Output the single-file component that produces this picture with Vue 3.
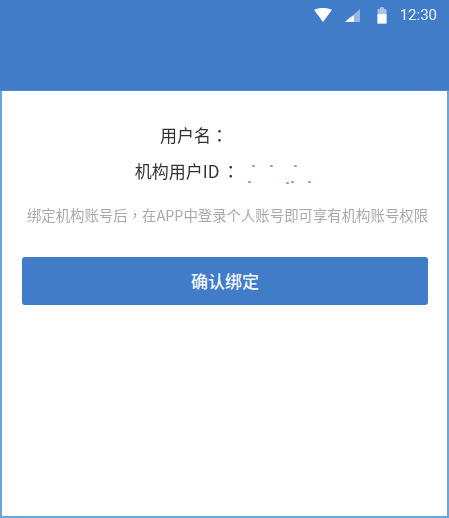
<script setup>
const specks = [
  { x: 13, y: 5 }, { x: 31, y: 5 }, { x: 55, y: 5 },
  { x: 9, y: 21 }, { x: 47, y: 22 }, { x: 52, y: 21 }, { x: 69, y: 21 }
]
</script>

<template>
  <div class="page">
    <header class="top">
      <div class="status">
        <svg class="wifi" width="18" height="14" viewBox="0 0 17 13"><path d="M0 1.500C5 -.5 12 -.5 17 1.500L8.500 13Z" fill="#fff"/></svg>
        <svg class="signal" width="16" height="13" viewBox="0 0 16 13"><path d="M15 0V13H0Z" fill="#fff" opacity=".45"/><path d="M9 6.500V13H0L5 8.500Z" fill="#fff" opacity=".9"/></svg>
        <svg class="battery" width="10" height="17" viewBox="0 0 10 17"><path d="M3 .5Q5 -.3 7 .5V2H8.500Q9.500 2 9.500 3V16.500H.5V3Q.5 2 1.500 2H3Z" fill="#fff" opacity=".55"/><path d="M.5 7H9.500V16.500H.5Z" fill="#fff"/></svg>
        <span class="time">12:30</span>
      </div>
    </header>
    <main class="body">
      <div class="row">
        <span class="label">用户名<span class="colon">：</span></span>
        <span class="value value-name"></span>
      </div>
      <div class="row">
        <span class="label">机构用户ID<span class="colon colon-id">：</span></span>
        <span class="value value-id">
          <i v-for="(s, i) in specks" :key="i" class="speck" :style="{ left: s.x + 'px', top: s.y + 'px' }"></i>
        </span>
      </div>
      <p class="hint">绑定机构账号后<span class="punct">，</span>在APP中登录个人账号即可享有机构账号权限</p>
      <button class="confirm">确认绑定</button>
    </main>
  </div>
</template>

<style scoped>
.page {
  display: flex;
  flex-direction: column;
  width: 449px;
  height: 518px;
  background: #fff;
  font-family: "Noto Sans CJK SC", "Liberation Sans", sans-serif;
  overflow: hidden;
}
.top {
  flex: none;
  height: 90px;
  background: #417cc8;
  border-bottom: 1px solid #4f8ad0;
}
.status {
  display: flex;
  justify-content: flex-end;
  align-items: center;
  height: 30px;
  padding-right: 12px;
  color: #fff;
  filter: blur(0.4px);
}
.wifi { margin-right: 13px; }
.signal { margin-right: 16px; margin-top: 1px; }
.battery { margin-right: 13px; }
.time {
  font: 15px/1 Roboto, sans-serif;
  color: #e6eef9;
}
.body {
  flex: 1;
  display: flex;
  flex-direction: column;
  padding: 26px 20px 0;
  border: solid #6aa5dc;
  border-width: 0 2px 2px;
}
.row {
  display: flex;
  justify-content: center;
  align-items: center;
  height: 36px;
}
.label {
  font-size: 17px;
  line-height: 22px;
  color: #333;
  white-space: nowrap;
  filter: blur(0.4px);
}
.colon { font-family: "Noto Sans CJK TC", sans-serif; }
.colon-id { margin-left: 3px; }
.value {
  position: relative;
  height: 22px;
}
.value-name { width: 61px; }
.value-id { width: 75px; }
.speck {
  position: absolute;
  width: 3px;
  height: 2px;
  background: #7f9fdf;
  border-radius: 1px;
  filter: blur(0.4px);
}
.hint {
  margin: 16px -3px 0 3px;
  font-size: 14.400px;
  line-height: 20px;
  color: #a9a9a9;
  text-align: center;
  white-space: nowrap;
  filter: blur(0.4px);
}
.punct { font-family: "Noto Sans CJK TC", sans-serif; }
.confirm {
  height: 48px;
  margin: 32px -1px 0 0;
  padding: 0 0 2px;
  border: 0;
  border-radius: 3px;
  background: #417cc8;
  color: #f4f7fc;
  font: 500 17px "Noto Sans CJK SC", "Liberation Sans", sans-serif;
}
</style>
